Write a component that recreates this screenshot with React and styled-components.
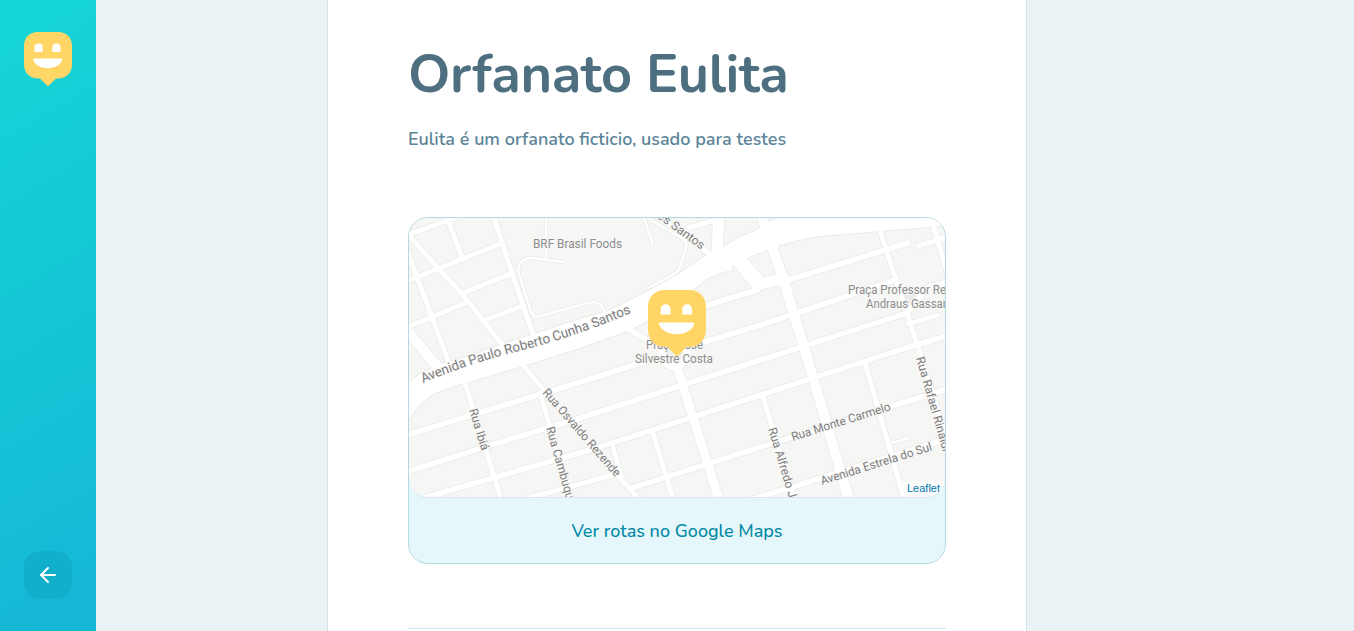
import React from 'react';
import styled, { createGlobalStyle } from 'styled-components';
import { FiArrowLeft } from 'react-icons/fi';

const GlobalStyle = createGlobalStyle`
  * { box-sizing: border-box; margin: 0; padding: 0; }
  body {
    background: #ebf2f5;
    font-family: Nunito, Lato, 'Open Sans', sans-serif;
    font-weight: 600;
    overflow: hidden;
  }
`;

const Page = styled.div`
  display: flex;
  height: 631px;
`;

const Sidebar = styled.aside`
  display: flex;
  flex-direction: column;
  justify-content: space-between;
  align-items: center;
  flex: 0 0 96px;
  padding: 32px 24px;
  background: linear-gradient(329.54deg, #15b6d6 0%, #15d6d6 100%);
`;

const BackButton = styled.button`
  display: flex;
  align-items: center;
  justify-content: center;
  width: 48px;
  height: 48px;
  border: 0;
  border-radius: 16px;
  background: #12afcb;
  color: #fff;
  cursor: pointer;
`;

const Main = styled.main`
  flex: 1;
  display: flex;
  justify-content: center;
  padding-right: 96px;
`;

const Details = styled.article`
  width: 700px;
  padding: 47px 80px 0;
  background: #fff;
  border: 1px solid #d3e2e5;
  border-width: 0 1px;
`;

const Title = styled.h1`
  font-size: 54px;
  line-height: 54px;
  font-weight: 700;
  letter-spacing: -0.38px;
  color: #4d6f80;
  white-space: nowrap;
`;

const Description = styled.p`
  margin-top: 24px;
  font-size: 18px;
  line-height: 28px;
  font-weight: 560;
  color: #5c8599;
  white-space: nowrap;
`;

const MapCard = styled.section`
  margin-top: 64px;
  border: 1px solid #b3dae2;
  border-radius: 20px;
  background: #e6f7fb;
  overflow: hidden;
`;

const MapView = styled.div`
  position: relative;
  height: 280px;
  border-bottom: 1px solid #dde3f0;
  border-radius: 0 0 20px 20px;
  overflow: hidden;
`;

const Streets = styled.svg`
  display: block;
  width: 536px;
  height: 280px;
  background: #f6f6f5;
  fill: none;
  stroke-linecap: round;
  stroke-linejoin: round;
`;

const StreetName = styled.text`
  font-family: Roboto, 'Open Sans', sans-serif;
  font-size: ${(p) => p.$size || 12}px;
  font-weight: 400;
  fill: ${(p) => p.$tone || '#7d7d7d'};
  stroke: #f8f8f7;
  stroke-width: 2px;
  paint-order: stroke;
`;

const Pin = styled.div`
  position: absolute;
  left: 239px;
  top: 72.4px;
`;

const Attribution = styled.a`
  position: absolute;
  right: 0;
  bottom: 0;
  padding: 0 5px 1px;
  background: rgba(255, 255, 255, 0.7);
  color: #0078a8;
  font: 400 11px/15px 'Liberation Sans', Arial, sans-serif;
`;

const RoutesLink = styled.a`
  display: block;
  padding: 21px 0 19px;
  text-align: center;
  font-size: 18px;
  line-height: 25px;
  font-weight: 550;
  color: #0089a5;
`;

const Divider = styled.hr`
  height: 1px;
  margin-top: 64px;
  border: 0;
  background: #d3e2e6;
`;

const Smile = ({ width, height }) => (
  <svg width={width} height={height} viewBox="0 0 48 54" preserveAspectRatio="none" display="block">
    <path
      fill="#ffd666"
      d="M14 0H34C42.5 0 48 5.5 48 14V32.5C48 41 42 46.5 34 46.5H32L25.2 53.3Q24 54.5 22.8 53.3L16 46.5H14C6 46.5 0 41 0 32.5V14C0 5.5 5.5 0 14 0Z"
    />
    <path fill="#fff" d="M10.5 20V15.7A4.1 4.1 0 0 1 18.7 15.7V20ZM28.3 20V15.7A4.1 4.1 0 0 1 36.5 15.7V20Z" />
    <path fill="#fff" d="M10 26.5H37.3Q38.5 26.5 38.2 28C36.5 33 30.5 36.2 23.7 36.2S11 33 9.1 28Q8.8 26.5 10 26.5Z" />
  </svg>
);

const avenue =
  'M400 390L408 383L420 374L436 366L463 358L503 344L580 319L605 312L623 304L648 291L680 273L708 254L723 247L738 238L757 230L767 223L780 217V210H955V225L880 231L820 236Q795 240 775 247L737 262Q730 264 732 270Q718 273 705 280Q690 293 660 314L630 330L580 348L523 366L465 383L437 392Q418 401 407 424L400 430Z';

const roads = [
  ['M405 236L460 216', 5],
  ['M446 215L462 257', 5],
  ['M405 282L502 243', 5],
  ['M405 231L438 268L463 295L504 347', 5],
  ['M493 215L512 273L535 340', 5],
  ['M463 293L510 274', 5],
  ['M405 328L468 302', 5],
  ['M485 320L522 306', 5],
  ['M405 245L432 317L449 363', 5],
  ['M402 325L437 366', 10],
  ['M546 215V259M563 262L533 258C523 257 516 265 519 274L531 312Q533 318 540 316L588 303C599 300 604 306 605 316', 2.5],
  ['M719 210L717 252', 11],
  ['M688 228L716 220', 5],
  ['M655 214L714 257', 5],
  ['M643 215L683 239Q688 242 686 248L680 267Q678 272 674 274L648 288M643 215L653 244', 2.5],
  ['M738 259L758 283', 15],
  ['M757 285L784 278', 11],
  ['M760 210L784 282L807 357L849 500', 10],
  ['M675 360L719 500', 9],
  ['M630 330L660 348', 5],
  ['M695 309L757 290', 6],
  ['M785 281L908 243', 5.5],
  ['M685 348L770 322L895 280', 5.5],
  ['M400 474L485 447L580 418L907 313L927 288L950 281', 5.5],
  ['M400 437L590 379L660 357', 5.5],
  ['M420 499L590 450L693 417L893 352L950 335', 5.5],
  ['M525 499L617 474', 5],
  ['M632 488L770 444L950 388', 5.5],
  ['M750 500L950 438', 5.5],
  ['M918 246L950 236', 5],
  ['M908 324L938 315', 4.5],
  ['M892 443L908 438', 2.5],
  ['M880 231L907 313L922 360L950 450', 5],
  ['M932 222L948 276', 5],
  ['M865 363L905 502', 5],
  ['M762 394L795 502', 5],
  ['M465 383L502 502', 5],
  ['M523 365L543 389L617 475L642 502', 5],
  ['M540 393L572 502', 5],
  ['M612 443L622 479', 4.5],
  ['M652 430L674 502', 5],
];

const names = [
  { x: 533, y: 248, len: 89, text: 'BRF Brasil Foods', tone: '#8c8c8c' },
  { x: 848, y: 294, len: 98, text: 'Praça Professor Re', tone: '#8c8c8c' },
  { x: 866, y: 308, len: 83, text: 'Andraus Gassan', tone: '#8c8c8c' },
  { x: 646, y: 349, len: 57, text: 'Praça José', tone: '#8c8c8c' },
  { x: 635, y: 363, len: 78, text: 'Silvestre Costa', tone: '#8c8c8c' },
  { x: 652, y: 214, len: 61, text: 'ves Santos', turn: 36 },
  { x: 469, y: 410, len: 43, text: 'Rua Ibiá', turn: 73 },
  { x: 542, y: 393, len: 112, text: 'Rua Osvaldo Rezende', turn: 49 },
  { x: 546, y: 428, len: 88, text: 'Rua Cambuquira', turn: 74 },
  { x: 768, y: 429, len: 92, text: 'Rua Alfredo Júlio', turn: 73 },
  { x: 793, y: 441, len: 103, text: 'Rua Monte Carmelo', turn: -17.5 },
  { x: 822, y: 485, len: 116, text: 'Avenida Estrela do Sul', turn: -17.5 },
  { x: 916, y: 358, len: 98, text: 'Rua Rafael Rinaldi', turn: 74 },
];

const StreetMap = () => (
  <Streets viewBox="409 218 536 280">
    <g stroke="#ebebea">
      <path d={avenue} strokeWidth="2" />
      {roads.map(([d, w]) => <path key={d} d={d} strokeWidth={w + 1.6} />)}
      <circle cx="674" cy="353" r="17" strokeWidth="1.6" />
    </g>
    <path d={avenue} fill="#fff" />
    <g stroke="#fff">
      {roads.map(([d, w]) => <path key={d} d={d} strokeWidth={w} />)}
    </g>
    <circle cx="674" cy="353" r="17" fill="#fff" />
    <circle cx="674" cy="353" r="9" fill="#ededec" />
    <path d="M903 292L919 288L908 306Z" fill="#ebebea" />
    {names.map((n) => (
      <StreetName
        key={n.text}
        $tone={n.tone}
        textLength={n.len}
        lengthAdjust="spacingAndGlyphs"
        transform={`translate(${n.x} ${n.y}) rotate(${n.turn || 0})`}
      >
        {n.text}
      </StreetName>
    ))}
    <path id="avenue-line" d="M423 383Q470 363 523 350Q580 335 633 312" />
    <StreetName $size={13.5} textLength="220" lengthAdjust="spacingAndGlyphs">
      <textPath href="#avenue-line">Avenida Paulo Roberto Cunha Santos</textPath>
    </StreetName>
  </Streets>
);

export default function App() {
  return (
    <>
      <GlobalStyle />
      <Page>
        <Sidebar>
          <Smile width={48} height={54} />
          <BackButton type="button" aria-label="Voltar">
            <FiArrowLeft size={24} />
          </BackButton>
        </Sidebar>
        <Main>
          <Details>
            <Title>Orfanato Eulita</Title>
            <Description>Eulita é um orfanato ficticio, usado para testes</Description>
            <MapCard>
              <MapView>
                <StreetMap />
                <Pin>
                  <Smile width={58} height={66} />
                </Pin>
                <Attribution>Leaflet</Attribution>
              </MapView>
              <RoutesLink>Ver rotas no Google Maps</RoutesLink>
            </MapCard>
            <Divider />
          </Details>
        </Main>
      </Page>
    </>
  );
}
